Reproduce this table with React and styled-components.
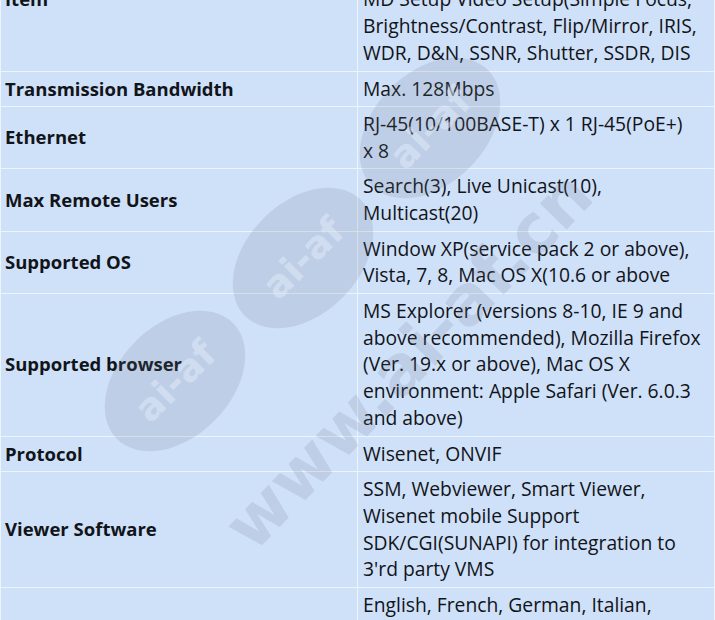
import React from 'react';
import styled, { createGlobalStyle } from 'styled-components';

const GlobalStyle = createGlobalStyle`
  html, body {
    margin: 0;
    padding: 0;
    background: #ffffff;
    overflow: hidden;
  }
  body {
    font-family: "Open Sans", "Noto Sans", Arial, sans-serif;
  }
`;

const Page = styled.div`
  position: relative;
  width: 715px;
  height: 620px;
  overflow: hidden;
`;

const SpecTable = styled.table`
  width: 715px;
  margin-top: -72px;
  border-collapse: collapse;
  table-layout: fixed;
  background-color: #cfe0f9;
  color: #111418;
  line-height: 26.8px;
`;

const LabelCol = styled.col`
  width: 357px;
`;

const Cell = styled.td`
  padding: 3.85px 4px 3.85px ${props => (props.$label ? '4px' : '5px')};
  border: 1px solid #eef4fd;
  vertical-align: middle;
  font-size: ${props => (props.$label ? '18.5px' : '19.3px')};
  font-weight: ${props => (props.$label ? 700 : 400)};
`;

const Line = styled.span`
  display: block;
  white-space: nowrap;
`;

const Overlay = styled.div`
  position: absolute;
  inset: 0;
  pointer-events: none;
`;

const Badge = styled.div`
  position: absolute;
  left: ${props => props.$x - 56}px;
  top: ${props => props.$y - 82}px;
  width: 112px;
  height: 164px;
  border-radius: 50%;
  background: rgba(108, 118, 138, 0.17);
  transform: rotate(45deg);
  display: flex;
  align-items: center;
  justify-content: center;
`;

const BadgeText = styled.span`
  transform: rotate(-90deg);
  font-family: "DejaVu Sans", sans-serif;
  font-size: 38px;
  font-weight: 700;
  color: rgba(226, 236, 250, 0.5);
  white-space: nowrap;
`;

const SiteMark = styled.div`
  position: absolute;
  left: 408px;
  top: 360px;
  transform: translate(-50%, -50%) rotate(-46deg);
  font-family: "DejaVu Sans", sans-serif;
  font-size: 68px;
  font-weight: 700;
  color: rgba(108, 118, 138, 0.17);
  white-space: nowrap;
`;

// lines are kept as printed in the source sheet
const specs = [
  {
    label: 'Item',
    lines: [
      'Camera Registration, Image Setup,',
      'Event Setup, Privacy Zone, Audio Setup,',
      'MD Setup Video Setup(Simple Focus,',
      'Brightness/Contrast, Flip/Mirror, IRIS,',
      'WDR, D&N, SSNR, Shutter, SSDR, DIS',
    ],
  },
  { label: 'Transmission Bandwidth', lines: ['Max. 128Mbps'] },
  { label: 'Ethernet', lines: ['RJ-45(10/100BASE-T) x 1 RJ-45(PoE+)', 'x 8'] },
  { label: 'Max Remote Users', lines: ['Search(3), Live Unicast(10),', 'Multicast(20)'] },
  {
    label: 'Supported OS',
    lines: ['Window XP(service pack 2 or above),', 'Vista, 7, 8, Mac OS X(10.6 or above'],
  },
  {
    label: 'Supported browser',
    lines: [
      'MS Explorer (versions 8-10, IE 9 and',
      'above recommended), Mozilla Firefox',
      '(Ver. 19.x or above), Mac OS X',
      'environment: Apple Safari (Ver. 6.0.3',
      'and above)',
    ],
  },
  { label: 'Protocol', lines: ['Wisenet, ONVIF'] },
  {
    label: 'Viewer Software',
    lines: [
      'SSM, Webviewer, Smart Viewer,',
      'Wisenet mobile Support',
      'SDK/CGI(SUNAPI) for integration to',
      "3'rd party VMS",
    ],
  },
  {
    label: 'Language',
    lines: [
      'English, French, German, Italian,',
      'Spanish, Portuguese, Russian, Polish,',
      'Czech, Turkish, Korean, Chinese,',
      'Japanese',
    ],
  },
];

const App = () => {
  return (
    <Page>
      <GlobalStyle />
      <SpecTable>
        <colgroup>
          <LabelCol />
          <col />
        </colgroup>
        <tbody>
          {specs.map(spec => (
            <tr key={spec.label}>
              <Cell $label>{spec.label}</Cell>
              <Cell>
                {spec.lines.map(line => (
                  <Line key={line}>{line}</Line>
                ))}
              </Cell>
            </tr>
          ))}
        </tbody>
      </SpecTable>
      <Overlay>
        <Badge $x={430} $y={128}>
          <BadgeText>ai-af</BadgeText>
        </Badge>
        <Badge $x={303} $y={258}>
          <BadgeText>ai-af</BadgeText>
        </Badge>
        <Badge $x={175} $y={381}>
          <BadgeText>ai-af</BadgeText>
        </Badge>
        <SiteMark>www.ai-af.cn</SiteMark>
      </Overlay>
    </Page>
  );
};

export default App;
